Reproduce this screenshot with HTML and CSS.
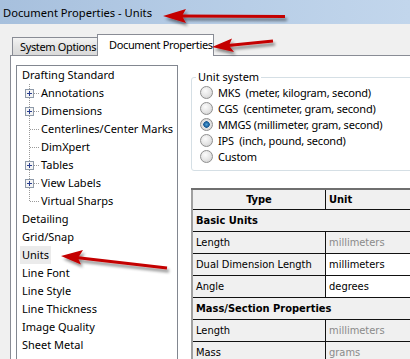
FILE: index.html
```html
<!DOCTYPE html>
<html>
<head>
<meta charset="utf-8">
<link rel="stylesheet" href="styles.css">
</head>
<body>
<div class="window">
  <div class="titlebar">Document Properties - Units</div>
  <div class="tabs">
    <div class="tab">System Options</div>
    <div class="tab active">Document Properties</div>
  </div>
  <div class="page">
    <div class="tree">
      <div class="node"><span class="label">Drafting Standard</span></div>
      <div class="node child">
        <svg class="branch" width="20" height="18" viewBox="0 0 20 18"><path class="dots" d="M9.5 0V18M14 9.5H20"/><rect class="box" x="5.5" y="5.5" width="8" height="8"/><path class="plus" d="M7 9.5H12M9.5 7V12"/></svg>
        <span class="label">Annotations</span></div>
      <div class="node child">
        <svg class="branch" width="20" height="18" viewBox="0 0 20 18"><path class="dots" d="M9.5 0V18M14 9.5H20"/><rect class="box" x="5.5" y="5.5" width="8" height="8"/><path class="plus" d="M7 9.5H12M9.5 7V12"/></svg>
        <span class="label">Dimensions</span></div>
      <div class="node child">
        <svg class="branch" width="20" height="18" viewBox="0 0 20 18"><path class="dots" d="M9.5 0V18M10 9.5H20"/></svg>
        <span class="label">Centerlines/Center Marks</span></div>
      <div class="node child">
        <svg class="branch" width="20" height="18" viewBox="0 0 20 18"><path class="dots" d="M9.5 0V18M10 9.5H20"/></svg>
        <span class="label">DimXpert</span></div>
      <div class="node child">
        <svg class="branch" width="20" height="18" viewBox="0 0 20 18"><path class="dots" d="M9.5 0V18M14 9.5H20"/><rect class="box" x="5.5" y="5.5" width="8" height="8"/><path class="plus" d="M7 9.5H12M9.5 7V12"/></svg>
        <span class="label">Tables</span></div>
      <div class="node child">
        <svg class="branch" width="20" height="18" viewBox="0 0 20 18"><path class="dots" d="M9.5 0V18M14 9.5H20"/><rect class="box" x="5.5" y="5.5" width="8" height="8"/><path class="plus" d="M7 9.5H12M9.5 7V12"/></svg>
        <span class="label">View Labels</span></div>
      <div class="node child">
        <svg class="branch" width="20" height="18" viewBox="0 0 20 18"><path class="dots" d="M9.5 0V10M10 9.5H20"/></svg>
        <span class="label">Virtual Sharps</span></div>
      <div class="node"><span class="label">Detailing</span></div>
      <div class="node"><span class="label">Grid/Snap</span></div>
      <div class="node"><span class="label selected">Units</span></div>
      <div class="node"><span class="label">Line Font</span></div>
      <div class="node"><span class="label">Line Style</span></div>
      <div class="node"><span class="label">Line Thickness</span></div>
      <div class="node"><span class="label">Image Quality</span></div>
      <div class="node"><span class="label">Sheet Metal</span></div>
    </div>
    <div class="right">
      <fieldset class="group">
        <legend>Unit system</legend>
        <div class="opt"><span class="radio"></span><span class="opt-text">MKS  (meter, kilogram, second)</span></div>
        <div class="opt"><span class="radio"></span><span class="opt-text">CGS  (centimeter, gram, second)</span></div>
        <div class="opt"><span class="radio checked"></span><span class="opt-text">MMGS (millimeter, gram, second)</span></div>
        <div class="opt"><span class="radio"></span><span class="opt-text">IPS  (inch, pound, second)</span></div>
        <div class="opt"><span class="radio"></span><span class="opt-text">Custom</span></div>
      </fieldset>
      <table class="units">
        <tr class="head"><th class="c1">Type</th><th class="c2">Unit</th></tr>
        <tr class="section"><td colspan="2">Basic Units</td></tr>
        <tr><td class="c1">Length</td><td class="c2 dim">millimeters</td></tr>
        <tr><td class="c1">Dual Dimension Length</td><td class="c2 edit">millimeters</td></tr>
        <tr><td class="c1">Angle</td><td class="c2 edit">degrees</td></tr>
        <tr class="section"><td colspan="2">Mass/Section Properties</td></tr>
        <tr><td class="c1">Length</td><td class="c2 dim">millimeters</td></tr>
        <tr><td class="c1">Mass</td><td class="c2 dim">grams</td></tr>
      </table>
    </div>
  </div>
  <svg class="arrows" width="410" height="359" viewBox="0 0 410 359">
    <defs>
      <filter id="sh" x="-20%" y="-50%" width="140%" height="220%">
        <feGaussianBlur in="SourceAlpha" stdDeviation="1.6"/>
        <feOffset dx="2" dy="3" result="b"/>
        <feComponentTransfer><feFuncA type="linear" slope="0.45"/></feComponentTransfer>
        <feMerge><feMergeNode/><feMergeNode in="SourceGraphic"/></feMerge>
      </filter>
    </defs>
    <g filter="url(#sh)" fill="#c40000" stroke="#c40000">
      <line x1="285" y1="16.5" x2="180" y2="16" stroke-width="3"/>
      <polygon points="163,16 186,9 182,16 186,23" stroke="none"/>
      <line x1="273" y1="41" x2="228" y2="45.5" stroke-width="3"/>
      <polygon points="212,47 232,38.5 229,45.5 234,52" stroke="none"/>
      <line x1="167" y1="268" x2="76" y2="257.5" stroke-width="3"/>
      <polygon points="61,256 83,250 78,258 81,264.5" stroke="none"/>
    </g>
  </svg>
</div>
</body>
</html>
```
FILE: styles.css
```css
html, body {
  margin: 0;
  padding: 0;
  overflow: hidden;
}
body {
  width: 410px;
  height: 359px;
  background: #f0f0f0;
  font-family: "Noto Sans", "Open Sans", sans-serif;
  font-size: 11px;
  color: #000;
}
.window {
  position: relative;
  width: 410px;
  height: 359px;
  overflow: hidden;
}
.titlebar {
  height: 24px;
  line-height: 25px;
  padding-left: 3px;
  font-size: 11.2px;
  color: #000;
  background: linear-gradient(to right, #a7c0dd 0%, #b4cbe5 45%, #c2d6ec 100%);
}
.tabs {
  display: flex;
  align-items: flex-end;
  height: 31px;
  padding-left: 12px;
  position: relative;
  z-index: 2;
}
.tab {
  box-sizing: border-box;
  width: 86px;
  height: 18px;
  line-height: 17px;
  padding-left: 7px;
  border: 1px solid #898c95;
  border-bottom: none;
  background: linear-gradient(#f3f3f3, #e2e2e2 55%, #d9d9d9);
  white-space: nowrap;
  letter-spacing: -0.35px;
}
.tab.active {
  width: 117px;
  height: 22px;
  line-height: 20px;
  padding-left: 11px;
  background: #fff;
  margin-left: -1px;
  margin-bottom: -1px;
}
.page {
  display: flex;
  align-items: flex-start;
  margin-left: 10px;
  border-top: 1px solid #898c95;
  border-left: 1px solid #898c95;
  background: #fff;
  height: 320px;
}
.tree {
  flex: none;
  width: 160px;
  height: 300px;
  margin: 9px 0 0 5px;
  border: 1px solid #828790;
  background: #fff;
}
.node {
  display: flex;
  align-items: center;
  height: 18px;
  white-space: nowrap;
}
.node .label {
  margin-left: 3px;
  padding: 0 2px;
  height: 18px;
  line-height: 18px;
}
.node.child .label {
  margin-left: -1px;
}
.node.child .branch {
  margin-left: 3px;
  flex: none;
  display: block;
}
.label.selected {
  background: #ebebeb;
}
.branch .dots {
  fill: none;
  stroke: #9a9a9a;
  stroke-width: 1;
  stroke-dasharray: 1 1;
}
.branch .box {
  fill: #f4f4f4;
  stroke: #8e9aa9;
  stroke-width: 1;
}
.branch .plus {
  stroke: #2a3f8f;
  stroke-width: 1;
  fill: none;
}
.right {
  flex: none;
  width: 240px;
  margin-left: 13px;
}
.group {
  margin: 14px 0 0 0;
  padding: 0 0 6px 8px;
  border: 1px solid #d5dfe5;
  border-radius: 3px;
  width: 220px;
}
.group legend {
  margin-left: -4px;
  padding: 0 2px;
  line-height: 14px;
  height: 14px;
}
.opt {
  display: flex;
  align-items: center;
  height: 16px;
  white-space: pre;
}
.opt-text {
  letter-spacing: -0.2px;
}
.radio {
  flex: none;
  width: 11px;
  height: 11px;
  border: 1px solid #8f8f8f;
  border-radius: 50%;
  background: radial-gradient(circle at 40% 35%, #fbfbfb 0%, #e6e6e6 50%, #c9c9c9 100%);
  margin-right: 5px;
}
.radio.checked {
  background: radial-gradient(circle at 50% 50%, #4ea4dc 0%, #1d5f9a 2.5px, #1d5f9a 3px, #e4e4e4 3.5px, #d0d0d0 100%);
}
.units {
  margin-top: 17px;
  border-collapse: collapse;
  width: 240px;
  font-family: "DejaVu Sans Condensed", "Liberation Sans", sans-serif;
  font-size: 11px;
  border-top: 2px solid #6f6f6f;
  border-left: 2px solid #a0a0a0;
}
.units td, .units th {
  height: 21px;
  padding: 0 3px;
  border-bottom: 1px solid #111;
  background: #f0f0f0;
  text-align: left;
  white-space: nowrap;
}
.units th {
  height: 19px;
  font-weight: bold;
}
.units th.c1 {
  text-align: center;
}
.units .c1 {
  width: 126px;
  border-right: 1px solid #111;
}
.units .section td {
  font-weight: bold;
}
.units .dim {
  color: #8a8a8a;
}
.units .edit {
  background: #fff;
}
.arrows {
  position: absolute;
  left: 0;
  top: 0;
  pointer-events: none;
  z-index: 5;
}
```
